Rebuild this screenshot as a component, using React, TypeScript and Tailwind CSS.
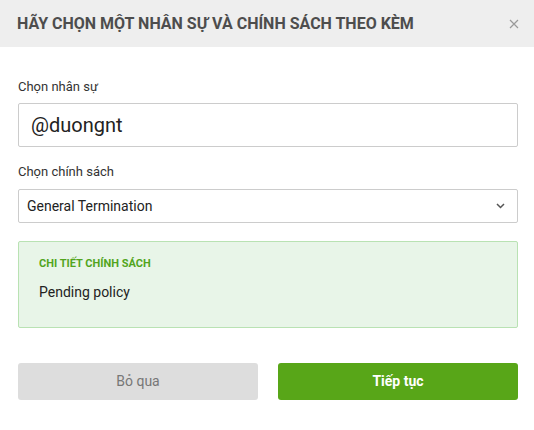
export default function App() {
  return (
    <div className="w-[534px] h-[430px] bg-white font-['Roboto',sans-serif] text-[#333]">
      {/* Header */}
      <div className="h-[47px] bg-[#eeeeee] flex items-center justify-between pl-[17px] pr-[15px]">
        <h2 className="text-[16px] leading-[20px] font-bold text-[#4d4d4d]">
          HÃY CHỌN MỘT NHÂN SỰ VÀ CHÍNH SÁCH THEO KÈM
        </h2>
        <svg width="10" height="10" viewBox="0 0 10 10" className="text-[#9a9a9a]">
          <path d="M1 1L9 9M9 1L1 9" stroke="currentColor" strokeWidth="1.2" />
        </svg>
      </div>

      {/* Body */}
      <div className="pl-[18px] pr-[16px] pt-[31px]">
        <label className="block text-[13px] leading-[18px] text-[#333] mb-[7px]">Chọn nhân sự</label>
        <div className="h-[44px] border border-[#cccccc] rounded-[2px] flex items-center pl-[12px]">
          <span className="text-[20px] text-[#222]">@duongnt</span>
        </div>

        <label className="block text-[13px] leading-[18px] text-[#333] mt-[16px] mb-[8px]">Chọn chính sách</label>
        <div className="h-[34px] border border-[#cccccc] rounded-[2px] flex items-center justify-between pl-[8px] pr-[12px]">
          <span className="text-[14px] text-[#222]">General Termination</span>
          <svg width="9" height="6" viewBox="0 0 9 6" className="text-[#555]">
            <path d="M1 1L4.5 4.5L8 1" stroke="currentColor" strokeWidth="1.5" fill="none" />
          </svg>
        </div>

        {/* Policy detail */}
        <div className="mt-[18px] h-[87px] bg-[#e8f5e8] border border-[#b9e2b3] rounded-[2px] pl-[20px] pt-[14px]">
          <div className="text-[11px] leading-[16px] font-bold text-[#52a51d]">CHI TIẾT CHÍNH SÁCH</div>
          <div className="mt-[10px] text-[14px] leading-[20px] text-[#222]">Pending policy</div>
        </div>

        {/* Actions */}
        <div className="mt-[35px] flex gap-[20px]">
          <button className="flex-1 h-[37px] rounded-[3px] bg-[#dddddd] text-[14px] font-normal text-[#777]">
            Bỏ qua
          </button>
          <button className="flex-1 h-[37px] rounded-[3px] bg-[#58a618] text-[14px] font-bold text-white">
            Tiếp tục
          </button>
        </div>
      </div>
    </div>
  );
}
